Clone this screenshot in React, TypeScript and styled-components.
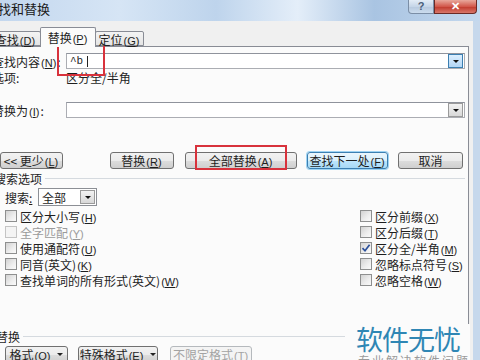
import styled, { createGlobalStyle } from "styled-components";

const Global = createGlobalStyle`
  html, body { margin: 0; padding: 0; }
  body { width: 480px; height: 360px; overflow: hidden; background: #f0f0f0; }
`;

const Window = styled.div`
  position: relative;
  width: 480px;
  height: 360px;
  overflow: hidden;
  display: flex;
  flex-direction: column;
  background: #c6d8ec;
  font-family: "Noto Sans CJK SC", "Liberation Sans", sans-serif;
  font-size: 12px;
  color: #1e1e1e;
`;

const TitleBar = styled.div`
  flex: none;
  height: 21px;
  display: flex;
  justify-content: space-between;
  align-items: flex-start;
  background: linear-gradient(90deg, #c3d7ee 0%, #d6e5f5 25%, #bed4ec 45%, #e4eef9 62%, #a9c4e2 78%, #c4d8ee 100%);
`;

const Title = styled.div`
  margin-left: -15px;
  margin-top: 1px;
  font-size: 13px;
  line-height: 16px;
  color: #1b1b1b;
`;

const Caption = styled.div`
  display: flex;
  margin-right: 3px;
`;

const CaptionButton = styled.div<{ $close?: boolean }>`
  width: ${(p) => (p.$close ? 41 : 24)}px;
  height: 13px;
  display: flex;
  align-items: center;
  justify-content: center;
  font-family: "Liberation Sans", sans-serif;
  font-weight: bold;
  font-size: 11px;
  line-height: 13px;
  color: ${(p) => (p.$close ? "#fff" : "#4a5f7a")};
  border: 1px solid ${(p) => (p.$close ? "#6b2a26" : "#7b8ea6")};
  border-top: none;
  border-radius: ${(p) => (p.$close ? "0 0 4px 0" : "0 0 0 4px")};
  background: ${(p) =>
    p.$close
      ? "linear-gradient(#e8a89c, #d2584b 50%, #c0392b 51%, #d8766a)"
      : "linear-gradient(#e3ecf6, #c6d6e8 50%, #b6c8de 51%, #cbdcee)"};
`;

const Client = styled.div`
  flex: 1;
  margin-right: 7px;
  background: #f0f0f0;
  display: flex;
  flex-direction: column;
  padding-top: 6px;
  min-height: 0;
`;

const Tabs = styled.div`
  flex: none;
  height: 19px;
  display: flex;
  align-items: flex-end;
  margin-left: -14px;
  position: relative;
  z-index: 1;
`;

const Tab = styled.div<{ $active?: boolean; $w: number; $pl?: number }>`
  width: ${(p) => p.$w}px;
  height: ${(p) => (p.$active ? 20 : 15)}px;
  margin-bottom: ${(p) => (p.$active ? -1 : 0)}px;
  box-sizing: border-box;
  display: flex;
  align-items: center;
  justify-content: center;
  white-space: nowrap;
  padding-top: ${(p) => (p.$active ? 0 : 1)}px;
  padding-left: ${(p) => p.$pl ?? 0}px;
  border: 1px solid #898c95;
  border-bottom: ${(p) => (p.$active ? "none" : "1px solid #898c95")};
  border-radius: 2px 2px 0 0;
  background: ${(p) => (p.$active ? "#fbfbfb" : "linear-gradient(#f4f4f4, #e4e4e4)")};
  margin-right: -1px;
  position: relative;
  z-index: ${(p) => (p.$active ? 2 : 1)};
`;

const Panel = styled.div`
  flex: 1;
  margin-left: -12px;
  margin-right: 4px;
  padding-left: 4px;
  padding-right: 3px;
  background: #fbfbfb;
  border-top: 1px solid #898c95;
  border-right: 1px solid #898c95;
  display: flex;
  flex-direction: column;
`;

const FieldRow = styled.div<{ $mt: number }>`
  display: flex;
  align-items: center;
  height: 16px;
  margin-top: ${(p) => p.$mt}px;
`;

const Label = styled.div`
  width: 74px;
  flex: none;
  white-space: nowrap;
`;

const Paren = styled.span`
  font-family: "Liberation Sans", sans-serif;
  font-size: 11px;
  margin: 0 1px;
  u {
    text-decoration: underline;
  }
`;

const Acc = ({ k }: { k: string }) => (
  <Paren>
    (<u>{k}</u>)
  </Paren>
);

const Combo = styled.div`
  flex: 1;
  height: 16px;
  box-sizing: border-box;
  border: 1px solid #abadb3;
  border-top-color: #8f939c;
  background: #fff;
  display: flex;
  align-items: center;
  justify-content: space-between;
  padding-left: 3px;
  padding-right: 1px;
`;

const ComboText = styled.div`
  font-family: "Liberation Mono", monospace;
  font-size: 11px;
  display: flex;
  align-items: center;
  gap: 4px;
`;

const CaretLine = styled.span`
  width: 1px;
  height: 11px;
  background: #222;
`;

const DropButton = styled.div<{ $hot?: boolean }>`
  width: 15px;
  height: 14px;
  box-sizing: border-box;
  border: 1px solid ${(p) => (p.$hot ? "#3c7fb1" : "#9a9a9a")};
  background: ${(p) => (p.$hot ? "linear-gradient(#dcefff, #b3d6f5)" : "linear-gradient(#f2f2f2, #d8d8d8)")};
  display: flex;
  align-items: center;
  justify-content: center;
  &::after {
    content: "";
    border-left: 3px solid transparent;
    border-right: 3px solid transparent;
    border-top: 3px solid #111;
  }
`;

const ButtonRow = styled.div<{ $mt: number }>`
  display: flex;
  align-items: center;
  margin-top: ${(p) => p.$mt}px;
`;

const Button = styled.div<{ $w: number; $ml: number; $default?: boolean; $disabled?: boolean }>`
  width: ${(p) => p.$w}px;
  margin-left: ${(p) => p.$ml}px;
  height: 17px;
  box-sizing: border-box;
  flex: none;
  display: flex;
  align-items: center;
  justify-content: center;
  gap: 6px;
  white-space: nowrap;
  overflow: hidden;
  border-radius: 3px;
  border: 1px solid ${(p) => (p.$default ? "#3c7fb1" : p.$disabled ? "#b5b9bd" : "#707070")};
  box-shadow: ${(p) => (p.$default ? "0 0 0 1px #9fd4f3" : "none")};
  color: ${(p) => (p.$disabled ? "#a3a3a3" : "#1e1e1e")};
  background: ${(p) =>
    p.$default
      ? "linear-gradient(#eaf6fd, #d9f0fc 50%, #bee6fd 51%, #a7d9f5)"
      : p.$disabled
      ? "#f4f4f4"
      : "linear-gradient(#f2f2f2, #ebebeb 50%, #dddddd 51%, #cfcfcf)"};
`;

const Arrow = styled.span`
  border-left: 3px solid transparent;
  border-right: 3px solid transparent;
  border-top: 3px solid #222;
`;

const Section = styled.div<{ $mt: number; $ml: number }>`
  display: flex;
  align-items: center;
  height: 16px;
  margin-top: ${(p) => p.$mt}px;
  margin-left: ${(p) => p.$ml}px;
  gap: 3px;
  &::after {
    content: "";
    flex: 1;
    height: 1px;
    background: #d5dadf;
  }
`;

const SearchRow = styled.div`
  display: flex;
  align-items: center;
  margin-top: 2px;
  padding-left: 13px;
  height: 18px;
`;

const SearchLabel = styled.div`
  width: 33px;
  u {
    text-decoration: underline;
  }
`;

const Select = styled.div`
  width: 59px;
  height: 18px;
  box-sizing: border-box;
  border: 1px solid #8c8f95;
  background: #fff;
  display: flex;
  align-items: center;
  justify-content: space-between;
  padding-left: 3px;
  padding-right: 1px;
`;

const Options = styled.div`
  display: grid;
  grid-template-columns: 355px 1fr;
  grid-auto-flow: column;
  grid-template-rows: repeat(5, 16px);
  margin-top: 2px;
  padding-left: 13px;
`;

const Check = styled.div<{ $disabled?: boolean }>`
  display: flex;
  align-items: center;
  gap: 3px;
  white-space: nowrap;
  color: ${(p) => (p.$disabled ? "#9a9a9a" : "#1e1e1e")};
`;

const Box = styled.span<{ $disabled?: boolean }>`
  width: 12px;
  height: 12px;
  box-sizing: border-box;
  border: 1px solid ${(p) => (p.$disabled ? "#c4c4c4" : "#8e8f8f")};
  background: ${(p) => (p.$disabled ? "#f4f4f4" : "linear-gradient(135deg, #d2d2d2, #eeeeee 60%, #fafafa)")};
  display: flex;
  align-items: center;
  justify-content: center;
  flex: none;
`;

const Highlight = styled.div<{ $x: number; $y: number; $w: number; $h: number }>`
  position: absolute;
  left: ${(p) => p.$x}px;
  top: ${(p) => p.$y}px;
  width: ${(p) => p.$w}px;
  height: ${(p) => p.$h}px;
  box-sizing: border-box;
  border: 2px solid #d8323c;
  pointer-events: none;
`;

const Watermark = styled.div`
  position: absolute;
  left: 345px;
  top: 324px;
  padding-left: 11px;
  background: #fbfbfb;
  display: flex;
  flex-direction: column;
`;

const MarkTitle = styled.div`
  font-size: 27px;
  line-height: 30px;
  color: #2f86b4;
  letter-spacing: -1px;
`;

const MarkSub = styled.div`
  font-size: 12px;
  line-height: 14px;
  margin-left: 2px;
  color: #9a9a9a;
  letter-spacing: 2px;
`;

type CheckItem = { text: string; key: string; checked?: boolean; disabled?: boolean };

const checks: CheckItem[] = [
  { text: "区分大小写", key: "H" },
  { text: "全字匹配", key: "Y", disabled: true },
  { text: "使用通配符", key: "U" },
  { text: "同音(英文)", key: "K" },
  { text: "查找单词的所有形式(英文)", key: "W" },
  { text: "区分前缀", key: "X" },
  { text: "区分后缀", key: "T" },
  { text: "区分全/半角", key: "M", checked: true },
  { text: "忽略标点符号", key: "S" },
  { text: "忽略空格", key: "W" },
];

const Tick = () => (
  <svg width="10" height="10" viewBox="0 0 10 10">
    <path d="M1.5 5.2 L4 7.8 L8.6 1.8" fill="none" stroke="#2a4f9a" strokeWidth="1.7" />
  </svg>
);

export default function App() {
  return (
    <Window>
      <Global />
      <TitleBar>
        <Title>查找和替换</Title>
        <Caption>
          <CaptionButton>?</CaptionButton>
          <CaptionButton $close>✕</CaptionButton>
        </Caption>
      </TitleBar>
      <Client>
        <Tabs>
          <Tab $w={55} $pl={4}>
            <span>查找<Acc k="D" /></span>
          </Tab>
          <Tab $active $w={56}>
            <span>替换<Acc k="P" /></span>
          </Tab>
          <Tab $w={49}>
            <span>定位<Acc k="G" /></span>
          </Tab>
        </Tabs>
        <Panel>
          <FieldRow $mt={6}>
            <Label>
              查找内容<Acc k="N" />:
            </Label>
            <Combo>
              <ComboText>
                ^b <CaretLine />
              </ComboText>
              <DropButton $hot />
            </Combo>
          </FieldRow>
          <FieldRow $mt={0}>
            <Label>选项:</Label>
            <div>区分全/半角</div>
          </FieldRow>
          <FieldRow $mt={17}>
            <Label>
              替换为<Acc k="I" />:
            </Label>
            <Combo>
              <ComboText />
              <DropButton />
            </Combo>
          </FieldRow>
          <ButtonRow $mt={34}>
            <Button $w={63} $ml={8}>
              <span>&lt;&lt; 更少<Acc k="L" /></span>
            </Button>
            <Button $w={64} $ml={47}>
              <span>替换<Acc k="R" /></span>
            </Button>
            <Button $w={112} $ml={11}>
              <span>全部替换<Acc k="A" /></span>
            </Button>
            <Button $w={81} $ml={10} $default>
              <span>查找下一处<Acc k="F" /></span>
            </Button>
            <Button $w={65} $ml={10}>
              <span>取消</span>
            </Button>
          </ButtonRow>
          <Section $mt={1} $ml={2}>搜索选项</Section>
          <SearchRow>
            <SearchLabel>
              搜索<u>:</u>
            </SearchLabel>
            <Select>
              全部
              <DropButton />
            </Select>
          </SearchRow>
          <Options>
            {checks.map((c, i) => (
              <Check key={i} $disabled={c.disabled}>
                <Box $disabled={c.disabled}>{c.checked && <Tick />}</Box>
                <span>
                  {c.text}
                  <Acc k={c.key} />
                </span>
              </Check>
            ))}
          </Options>
          <Section $mt={40} $ml={4}>替换</Section>
          <ButtonRow $mt={2}>
            <Button $w={63} $ml={13}>
              <span>格式<Acc k="O" /></span>
              <Arrow />
            </Button>
            <Button $w={80} $ml={10}>
              <span>特殊格式<Acc k="E" /></span>
              <Arrow />
            </Button>
            <Button $w={82} $ml={12} $disabled>
              <span>不限定格式<Acc k="T" /></span>
            </Button>
          </ButtonRow>
        </Panel>
      </Client>
      <Highlight $x={57} $y={44} $w={48} $h={32} />
      <Highlight $x={195} $y={145} $w={92} $h={25} />
      <Watermark>
        <MarkTitle>软件无忧</MarkTitle>
        <MarkSub>专业解决软件问题</MarkSub>
      </Watermark>
    </Window>
  );
}
